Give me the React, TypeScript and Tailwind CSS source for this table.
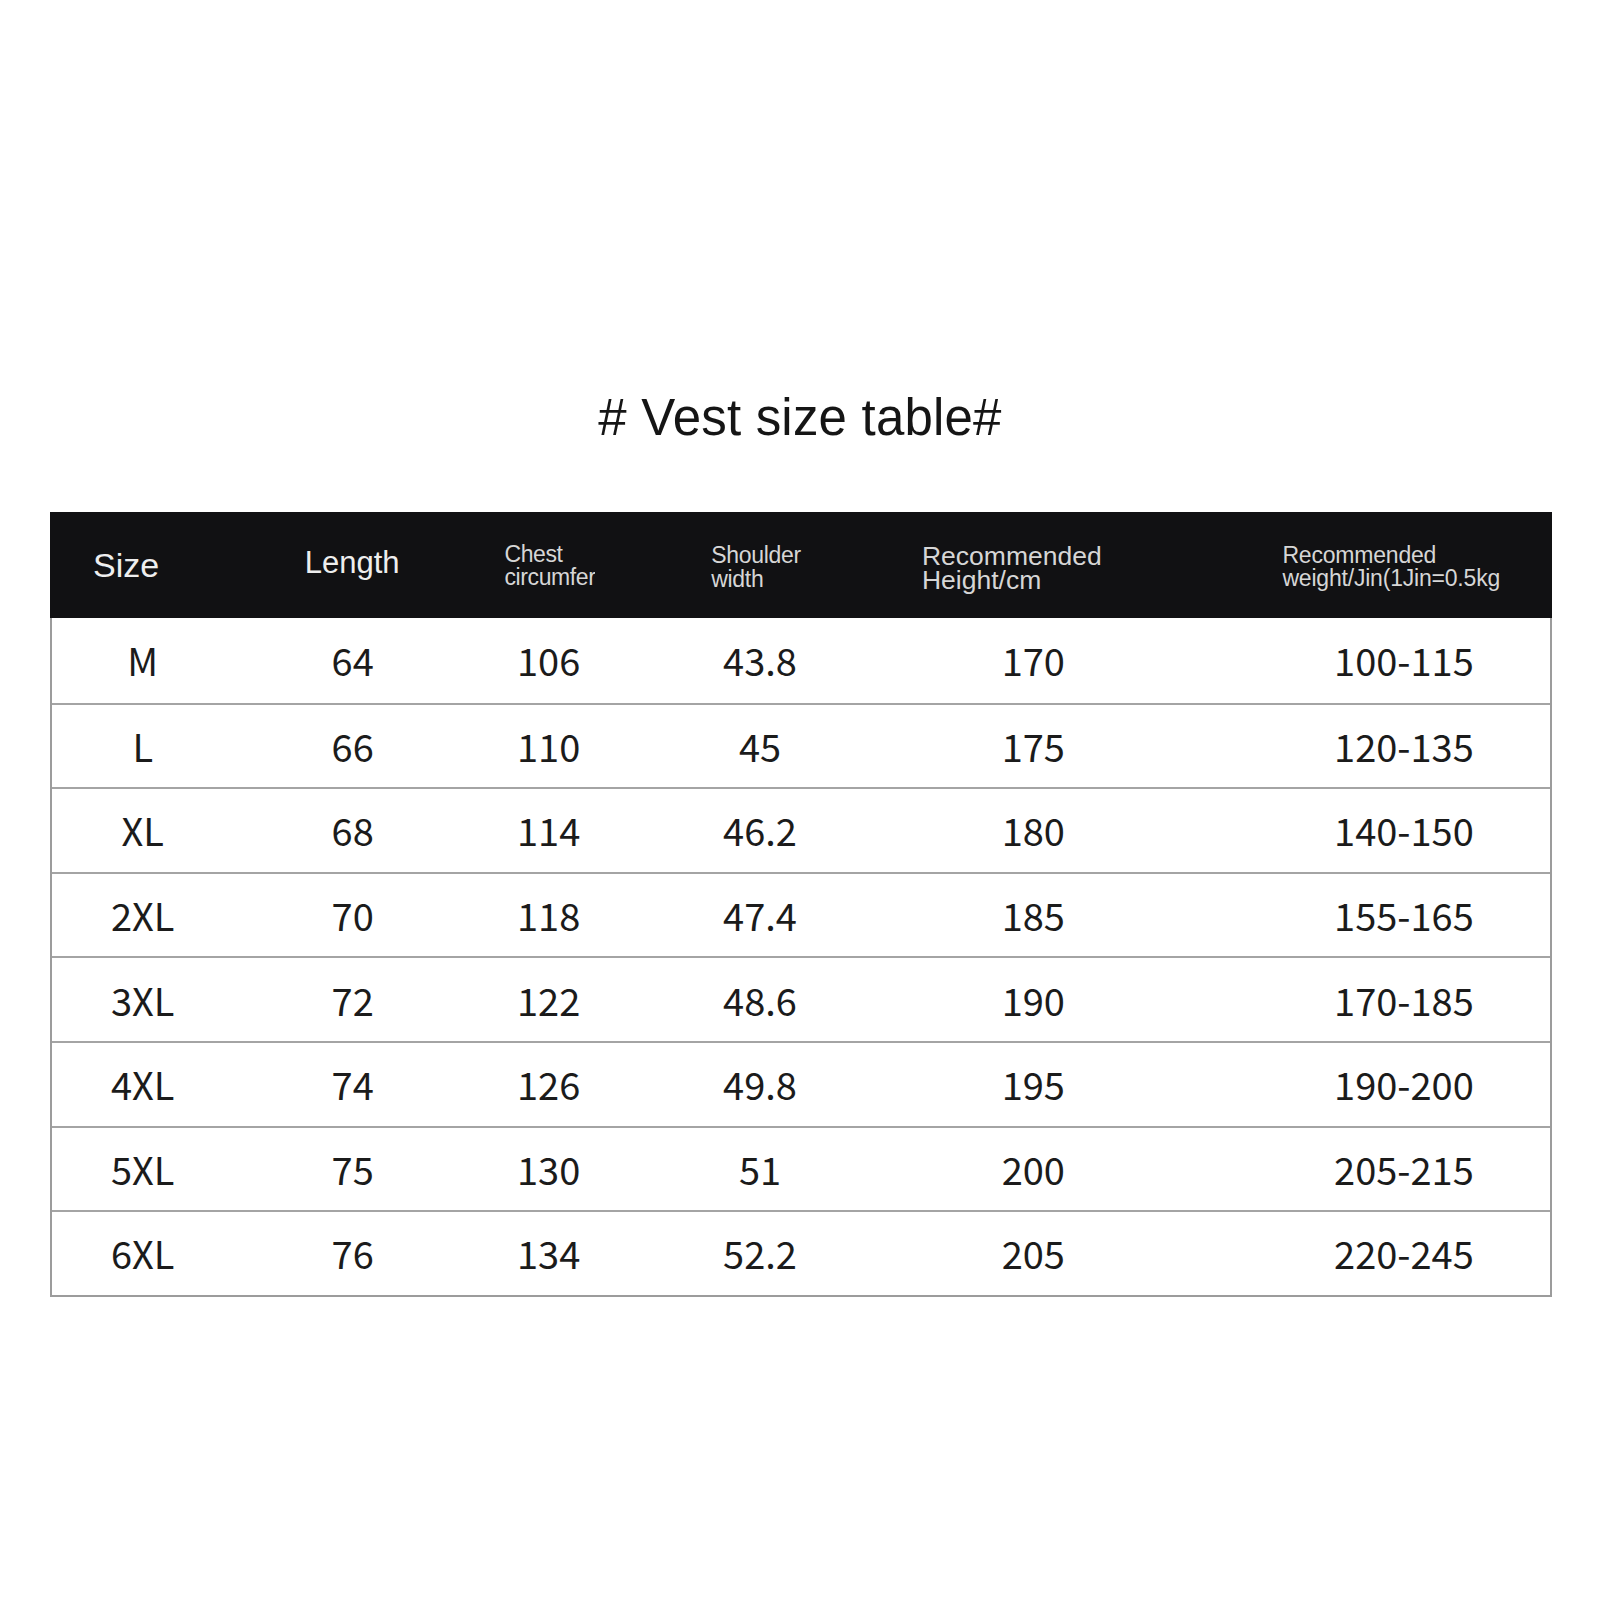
const rows = [
  ['M', '64', '106', '43.8', '170', '100-115'],
  ['L', '66', '110', '45', '175', '120-135'],
  ['XL', '68', '114', '46.2', '180', '140-150'],
  ['2XL', '70', '118', '47.4', '185', '155-165'],
  ['3XL', '72', '122', '48.6', '190', '170-185'],
  ['4XL', '74', '126', '49.8', '195', '190-200'],
  ['5XL', '75', '130', '51', '200', '205-215'],
  ['6XL', '76', '134', '52.2', '205', '220-245'],
]

// widths + per-column nudges so the numbers sit where the picture has them
const cols = [
  'w-[200px] pr-[18px]',
  'w-[205px] pr-[2px]',
  'w-[200px] pr-[14px]',
  'w-[240px] pr-[30px]',
  'w-[340px] pr-[62px]',
  'w-[317px] pl-[24px]',
]

export default function App() {
  return (
    <div className="w-[1600px] h-[1600px] bg-white flex flex-col items-center pt-[387px] font-['Liberation_Sans',Arial,sans-serif]">
      <h1 className="text-[51px] leading-[62px] text-[#151515] tracking-[0.2px]"># Vest size table#</h1>

      <div className="mt-[63px] ml-[2px] w-[1502px] border-x-2 border-b-2 border-[#9c9c9c]">
        <div className="flex h-[106px] bg-[#111113] -mx-[2px] items-center text-[#d6d6d6]">
          <div className="w-[202px] pl-[43px] text-[34px] text-[#eeeeee]">Size</div>
          <div className="w-[205px] pl-[53px] text-[31px] text-[#eeeeee] -mt-[4px]">Length</div>
          <div className="w-[200px] pl-[48px] mt-[6px]">
            <div className="w-[91px] overflow-hidden whitespace-nowrap text-[23px] leading-[23px] pb-[4px] tracking-[-0.4px]">
              Chest
              <br />
              circumference
            </div>
          </div>
          <div className="w-[240px] pl-[55px] mt-[4px] text-[23px] leading-[24px] tracking-[-0.3px]">
            Shoulder
            <br />
            width
          </div>
          <div className="w-[340px] pl-[26px] mt-[6px] text-[26.5px] leading-[24px]">
            Recommended
            <br />
            Height/cm
          </div>
          <div className="w-[317px] pl-[47px] mt-[8px]">
            <div className="w-[218px] overflow-hidden whitespace-nowrap text-[23px] leading-[23px] pb-[4px] tracking-[-0.2px]">
              Recommended
              <br />
              weight/Jin(1Jin=0.5kg)
            </div>
          </div>
        </div>

        {rows.map((r, i) => (
          <div
            key={r[0]}
            className={`flex h-[84.6px] items-center text-[#1b1b1b] text-[38px] font-['Noto_Sans_CJK_SC','Noto_Sans',sans-serif] ${
              i > 0 ? 'border-t-2 border-[#a4a4a4]' : ''
            }`}
          >
            {r.map((cell, j) => (
              <div key={j} className={`${cols[j]} text-center leading-none`}>
                {cell}
              </div>
            ))}
          </div>
        ))}
      </div>
    </div>
  )
}
